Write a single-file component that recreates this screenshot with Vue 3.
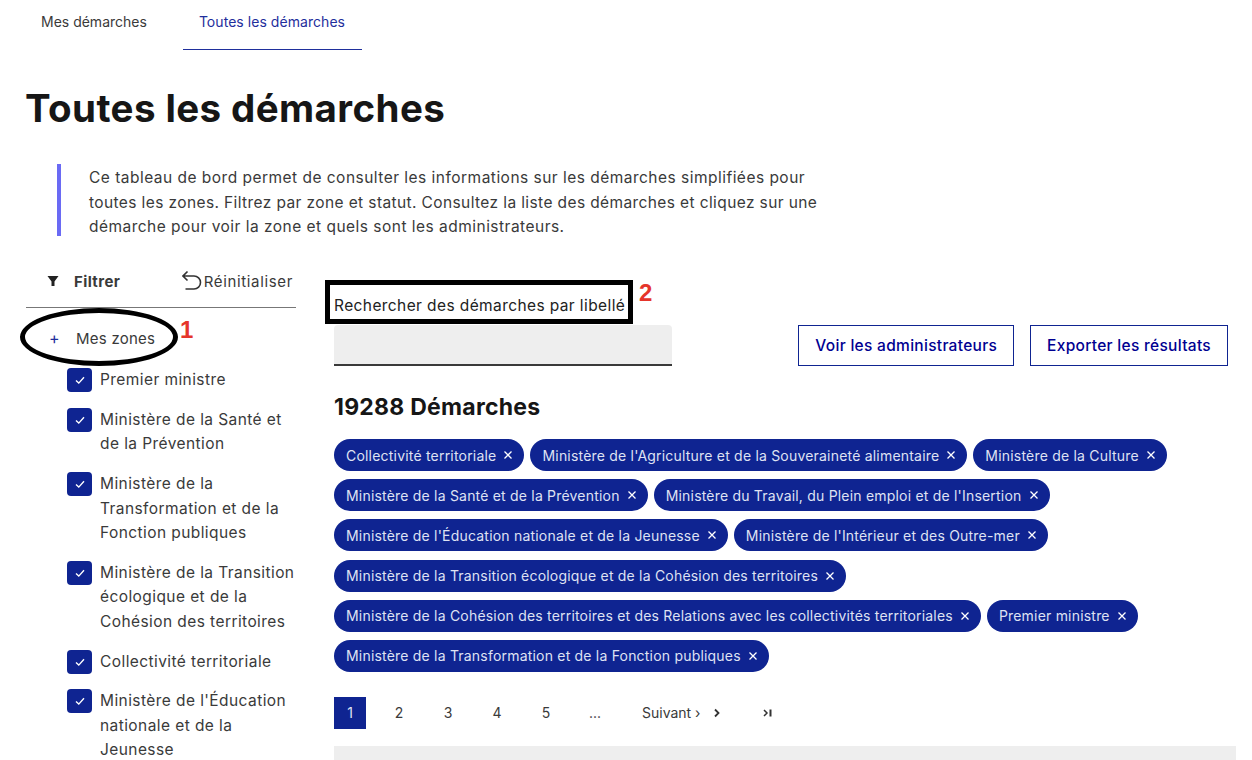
<script setup>
const zones = [
  ['Premier ministre'],
  ['Ministère de la Santé et', 'de la Prévention'],
  ['Ministère de la', 'Transformation et de la', 'Fonction publiques'],
  ['Ministère de la Transition', 'écologique et de la', 'Cohésion des territoires'],
  ['Collectivité territoriale'],
  ["Ministère de l'Éducation", 'nationale et de la', 'Jeunesse'],
]
const tagRows = [
  ['Collectivité territoriale', "Ministère de l'Agriculture et de la Souveraineté alimentaire", 'Ministère de la Culture'],
  ['Ministère de la Santé et de la Prévention', "Ministère du Travail, du Plein emploi et de l'Insertion"],
  ["Ministère de l'Éducation nationale et de la Jeunesse", "Ministère de l'Intérieur et des Outre-mer"],
  ['Ministère de la Transition écologique et de la Cohésion des territoires'],
  ['Ministère de la Cohésion des territoires et des Relations avec les collectivités territoriales', 'Premier ministre'],
  ['Ministère de la Transformation et de la Fonction publiques'],
]
</script>

<template>
  <div class="page">
    <nav class="tabs">
      <a class="tab">Mes démarches</a>
      <a class="tab active">Toutes les démarches</a>
    </nav>
    <h1>Toutes les démarches</h1>
    <p class="intro">Ce tableau de bord permet de consulter les informations sur les démarches simplifiées pour<br><span class="line2">toutes les zones. Filtrez par zone et statut. Consultez la liste des démarches et cliquez sur une</span><br>démarche pour voir la zone et quels sont les administrateurs.</p>
    <div class="main">
      <aside class="side">
        <div class="filter-head">
          <span class="filter"><svg width="12" height="12" viewBox="0 0 12 12"><path d="M0.5 1h11L7.5 6.5V11h-3V6.5z" fill="#222"/></svg>Filtrer</span>
          <span class="reset"><svg width="22" height="22" viewBox="0 0 22 22" fill="none" stroke="#333" stroke-width="1.6"><path d="M5.5 1.5L1 6l4.5 4.5M1.5 6H12a6.5 6.5 0 0 1 0 13H3.5"/></svg>Réinitialiser</span>
        </div>
        <div class="accordion">
          <span class="plus">+</span>
          <span>Mes zones</span>
          <span class="ring"></span>
          <span class="mark mark1">1</span>
        </div>
        <ul class="zones">
          <li v-for="z in zones" :key="z[0]" class="zone">
            <span class="check"><svg width="12" height="12" viewBox="0 0 12 12" fill="none" stroke="#fff" stroke-width="1.4"><path d="M2 6.5l2.8 2.6L10 3.2"/></svg></span>
            <span class="zone-label"><span v-for="l in z" :key="l">{{ l }}</span></span>
          </li>
        </ul>
      </aside>
      <section class="content">
        <div class="toolbar">
          <div class="search">
            <label class="search-label">Rechercher des démarches par libellé<span class="box"></span><span class="mark mark2">2</span></label>
            <div class="input"></div>
          </div>
          <div class="actions">
            <button>Voir les administrateurs</button>
            <button>Exporter les résultats</button>
          </div>
        </div>
        <h2>19288 Démarches</h2>
        <div class="tags">
          <div v-for="(row, i) in tagRows" :key="i" class="tag-row">
            <span v-for="t in row" :key="t" class="tag">{{ t }}<svg width="10" height="10" viewBox="0 0 10 10" stroke="#fff" stroke-width="1.3"><path d="M1.5 1.5l7 7M8.5 1.5l-7 7"/></svg></span>
          </div>
        </div>
        <div class="pager">
          <span class="pg cur">1</span>
          <span class="pg">2</span>
          <span class="pg">3</span>
          <span class="pg">4</span>
          <span class="pg">5</span>
          <span class="pg">...</span>
          <span class="next">Suivant ›</span>
          <svg class="chev" width="8" height="10" viewBox="0 0 8 10" fill="none" stroke="#333" stroke-width="1.8"><path d="M2 1.5L5.5 5 2 8.5"/></svg>
          <svg class="last" width="10" height="10" viewBox="0 0 10 10" fill="none" stroke="#333" stroke-width="1.5"><path d="M1 2l3 3-3 3"/><path d="M7.5 1.5v7" stroke-width="2"/></svg>
        </div>
        <div class="table-head"></div>
      </section>
    </div>
  </div>
</template>

<style>
html, body { margin: 0; background: #fff; }
</style>

<style scoped>
.page {
  width: 1252px;
  height: 760px;
  overflow: hidden;
  font-family: Inter, "Noto Sans", sans-serif;
  color: #3a3a3a;
  box-sizing: border-box;
  padding-left: 25px;
}
.tabs { display: flex; height: 50px; }
.tab { font-size: 14px; line-height: 44px; padding: 0 16px; }
.tab.active { color: #1f2f9c; border-bottom: 1px solid #1f2f9c; height: 50px; box-sizing: border-box; margin-left: 20px; padding: 0 17px 0 16px; letter-spacing: 0.05px; }
h1 { margin: 36px 0 0; font-size: 38.5px; line-height: 44px; font-weight: 700; color: #161616; height: 44px; letter-spacing: 0.4px; }
.intro {
  margin: 34px 0 0 32px;
  border-left: 4px solid #6a6af4;
  padding: 2px 0 0 28px;
  box-sizing: border-box;
  font-size: 15.5px;
  line-height: 24.5px;
  letter-spacing: 0.48px;
  height: 72px;
  white-space: nowrap;
}
.line2 { letter-spacing: 0.39px; }
.main { display: flex; margin-top: 27px; }
.side { width: 270px; flex: none; margin-left: 1px; }
.filter-head {
  display: flex; justify-content: space-between; align-items: center;
  height: 45px; border-bottom: 1px solid #777; box-sizing: border-box;
  padding: 0 3px 8px 21px; font-size: 15px;
}
.filter { display: flex; align-items: center; gap: 15px; font-weight: 700; color: #3a3a3a; letter-spacing: 0.4px; }
.reset { display: flex; align-items: center; letter-spacing: 0.65px; }
.accordion { position: relative; display: flex; align-items: center; height: 60px; padding-left: 23px; font-size: 15px; letter-spacing: 0.25px; }
.plus { color: #1f2f9c; width: 27px; font-size: 16px; }
.ring {
  position: absolute; left: -6px; top: 0; width: 158px; height: 58px; box-sizing: border-box;
  border: 5px solid #000; border-radius: 50%;
}
.mark { position: absolute; color: #e5352b; font-family: "Liberation Sans", sans-serif; font-weight: 700; font-size: 24px; line-height: 24px; letter-spacing: 0; }
.mark1 { left: 154px; top: 10px; }
.zones { list-style: none; margin: 0; padding: 0 0 0 41px; }
.zone { display: flex; gap: 8px; margin-bottom: 15.3px; font-size: 15.5px; line-height: 24.5px; letter-spacing: 0.42px; }
.check { flex: none; width: 25px; height: 24px; border-radius: 4px; display: flex; align-items: center; justify-content: center; background: #0f2491; }
.zone-label { display: flex; flex-direction: column; white-space: nowrap; }
.content { margin-left: 38px; width: 902px; flex: none; }
.toolbar { display: flex; justify-content: space-between; align-items: flex-end; width: 894px; }
.search { width: 338px; }
.search-label { position: relative; display: block; font-size: 15.5px; line-height: 24px; margin-top: 31px; color: #222; white-space: nowrap; letter-spacing: 0.4px; }
.box { position: absolute; left: -9px; top: -14px; width: 308px; height: 44px; box-sizing: border-box; border: 5px solid #000; }
.mark2 { left: 305px; top: -13px; }
.input { height: 41px; margin-top: 7px; background: #eee; border-bottom: 2px solid #3a3a3a; border-radius: 4px 4px 0 0; box-sizing: border-box; }
.actions { display: flex; gap: 16px; }
button {
  height: 41px; padding: 0 16px; background: #fff; border: 1px solid #0f2491; color: #000091;
  font: 500 15.5px Inter, sans-serif; letter-spacing: 0.3px; white-space: nowrap; box-sizing: border-box;
}
h2 { margin: 27px 0 0; font-size: 23px; line-height: 28px; font-weight: 700; color: #161616; letter-spacing: 0.25px; }
.tags { margin-top: 18px; display: flex; flex-direction: column; gap: 8.2px; }
.tag-row { display: flex; gap: 6px; }
.tag {
  display: inline-flex; align-items: center; gap: 7px; height: 32px; padding: 0 11px 0 12px;
  background: #0f2491; color: #dfe2f3; border-radius: 16px; font-size: 14px; letter-spacing: 0.2px; white-space: nowrap;
}
.pager { display: flex; align-items: center; margin-top: 25px; height: 32px; font-size: 14px; }
.pg { width: 32px; height: 32px; line-height: 32px; text-align: center; margin-right: 17px; }
.pg.cur { background: #0f2491; color: #dfe2f3; }
.next { margin-left: 14px; white-space: nowrap; margin-right: 13px; }
.last { margin-left: 42px; }
.table-head { height: 40px; background: #eee; margin-top: 17px; }
</style>
